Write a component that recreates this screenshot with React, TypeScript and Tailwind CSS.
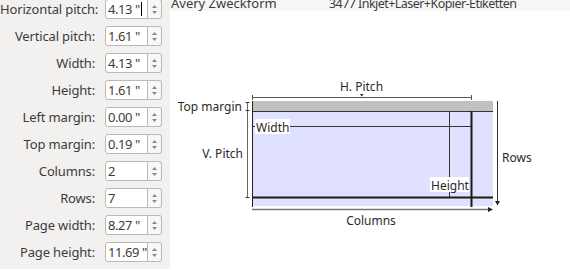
import React from "react";

const rows: [string, string, boolean?][] = [
  ["Horizontal pitch:", "4.13 \"", true],
  ["Vertical pitch:", "1.61 \""],
  ["Width:", "4.13 \""],
  ["Height:", "1.61 \""],
  ["Left margin:", "0.00 \""],
  ["Top margin:", "0.19 \""],
  ["Columns:", "2"],
  ["Rows:", "7"],
  ["Page width:", "8.27 \""],
  ["Page height:", "11.69 \""],
];

function Spin() {
  return (
    <div className="w-[14px] h-5 border border-[#b9b9b5] border-l-0 rounded-r-[3px] bg-[#f8f8f7] flex flex-col items-center justify-center gap-[3px]">
      <svg width="5" height="3" viewBox="0 0 5 3"><path d="M0 3 L2.5 0 L5 3 Z" fill="#8a8a8a" /></svg>
      <svg width="5" height="3" viewBox="0 0 5 3"><path d="M0 0 L2.5 3 L5 0 Z" fill="#8a8a8a" /></svg>
    </div>
  );
}

export default function App() {
  const font = { fontFamily: '"Noto Sans", "Open Sans", sans-serif' };
  return (
    <div className="w-[570px] h-[270px] flex overflow-hidden bg-white text-[#3c3c3c]" style={font}>
      <div className="w-[170px] h-full bg-[#f2f1f0] flex flex-col gap-[7px] -mt-px">
        {rows.map(([label, val, cursor]) => (
          <div key={label} className="flex items-center h-5 shrink-0">
            <div className="w-[95px] text-right text-[13px] leading-5 whitespace-nowrap tracking-[-0.15px]">{label}</div>
            <div className="ml-[10px] w-[43px] h-5 border border-[#b9b9b5] rounded-l-[3px] bg-white flex items-center pl-[2px] text-[13px] leading-5 whitespace-nowrap tracking-[-0.45px] overflow-hidden">
              <span>{val}</span>
              {cursor && <span className="ml-[1px] w-[1px] h-[14px] bg-black" />}
            </div>
            <Spin />
          </div>
        ))}
      </div>
      <div className="flex-1 flex flex-col">
        <div className="h-[11px] bg-[#f6f6f6] overflow-hidden flex items-start whitespace-nowrap">
          <div className="pl-[1px] w-[159px] -mt-[3px] text-[13px] leading-[13px]">Avery Zweckform</div>
          <div className="-mt-[3px] text-[12.5px] leading-[13px] tracking-[-0.55px]">3477 Inkjet+Laser+Kopier-Etiketten</div>
        </div>
        <svg width="400" height="259" viewBox="170 11 400 259" className="block">
          <g fontFamily='"Noto Sans", sans-serif' fontSize="12" fill="#2a2a2a">
            {/* H pitch */}
            <text x="361.5" y="91" textAnchor="middle">H. Pitch</text>
            <line x1="252" y1="97.5" x2="471.5" y2="97.5" stroke="#555" strokeWidth="1" />
            <line x1="252.5" y1="95" x2="252.5" y2="100" stroke="#555" strokeWidth="1" />
            <line x1="471.5" y1="95" x2="471.5" y2="100" stroke="#555" strokeWidth="1" />
            <path d="M360 94 L363.5 94 L361.75 96.5 Z" fill="#222" />
            {/* top margin band */}
            <rect x="252" y="101" width="241" height="10" fill="#c0c0c0" />
            <rect x="252" y="111" width="241" height="95" fill="#e0e0ff" />
            <line x1="252" y1="111.5" x2="493" y2="111.5" stroke="#333" strokeWidth="1" />
            <line x1="252.5" y1="101" x2="252.5" y2="207" stroke="#222" strokeWidth="1" />
            {/* width line */}
            <line x1="252" y1="126.5" x2="471" y2="126.5" stroke="#333" strokeWidth="1" />
            <rect x="255" y="119" width="35" height="15" fill="#fff" />
            <text x="256" y="131.5">Width</text>
            {/* height line */}
            <line x1="449.5" y1="111" x2="449.5" y2="197" stroke="#333" strokeWidth="1" />
            <rect x="430" y="177" width="39" height="15" fill="#fff" />
            <text x="431" y="189.5">Height</text>
            {/* thick lines */}
            <line x1="471.5" y1="111" x2="471.5" y2="207" stroke="#1a1a1a" strokeWidth="2" />
            <line x1="252" y1="197.5" x2="493" y2="197.5" stroke="#1a1a1a" strokeWidth="2" />
            {/* left dimension */}
            <line x1="247.5" y1="102" x2="247.5" y2="197.5" stroke="#666" strokeWidth="1" />
            <line x1="245.5" y1="102.5" x2="249.5" y2="102.5" stroke="#333" strokeWidth="1" />
            <line x1="245.5" y1="110.5" x2="249.5" y2="110.5" stroke="#333" strokeWidth="1" />
            <line x1="245.5" y1="197.5" x2="249.5" y2="197.5" stroke="#333" strokeWidth="1" />
            <text x="242" y="111" textAnchor="end">Top margin</text>
            <text x="243" y="158" textAnchor="end">V. Pitch</text>
            {/* rows arrow */}
            <line x1="497.5" y1="101" x2="497.5" y2="203" stroke="#333" strokeWidth="1" />
            <path d="M495 201 L500 201 L497.5 205.5 Z" fill="#222" />
            <text x="502" y="161.5">Rows</text>
            {/* columns arrow */}
            <line x1="252" y1="209.5" x2="489" y2="209.5" stroke="#777" strokeWidth="1.5" />
            <path d="M488 207 L493 209.5 L488 212 Z" fill="#222" />
            <text x="371" y="225" textAnchor="middle">Columns</text>
          </g>
        </svg>
      </div>
    </div>
  );
}
